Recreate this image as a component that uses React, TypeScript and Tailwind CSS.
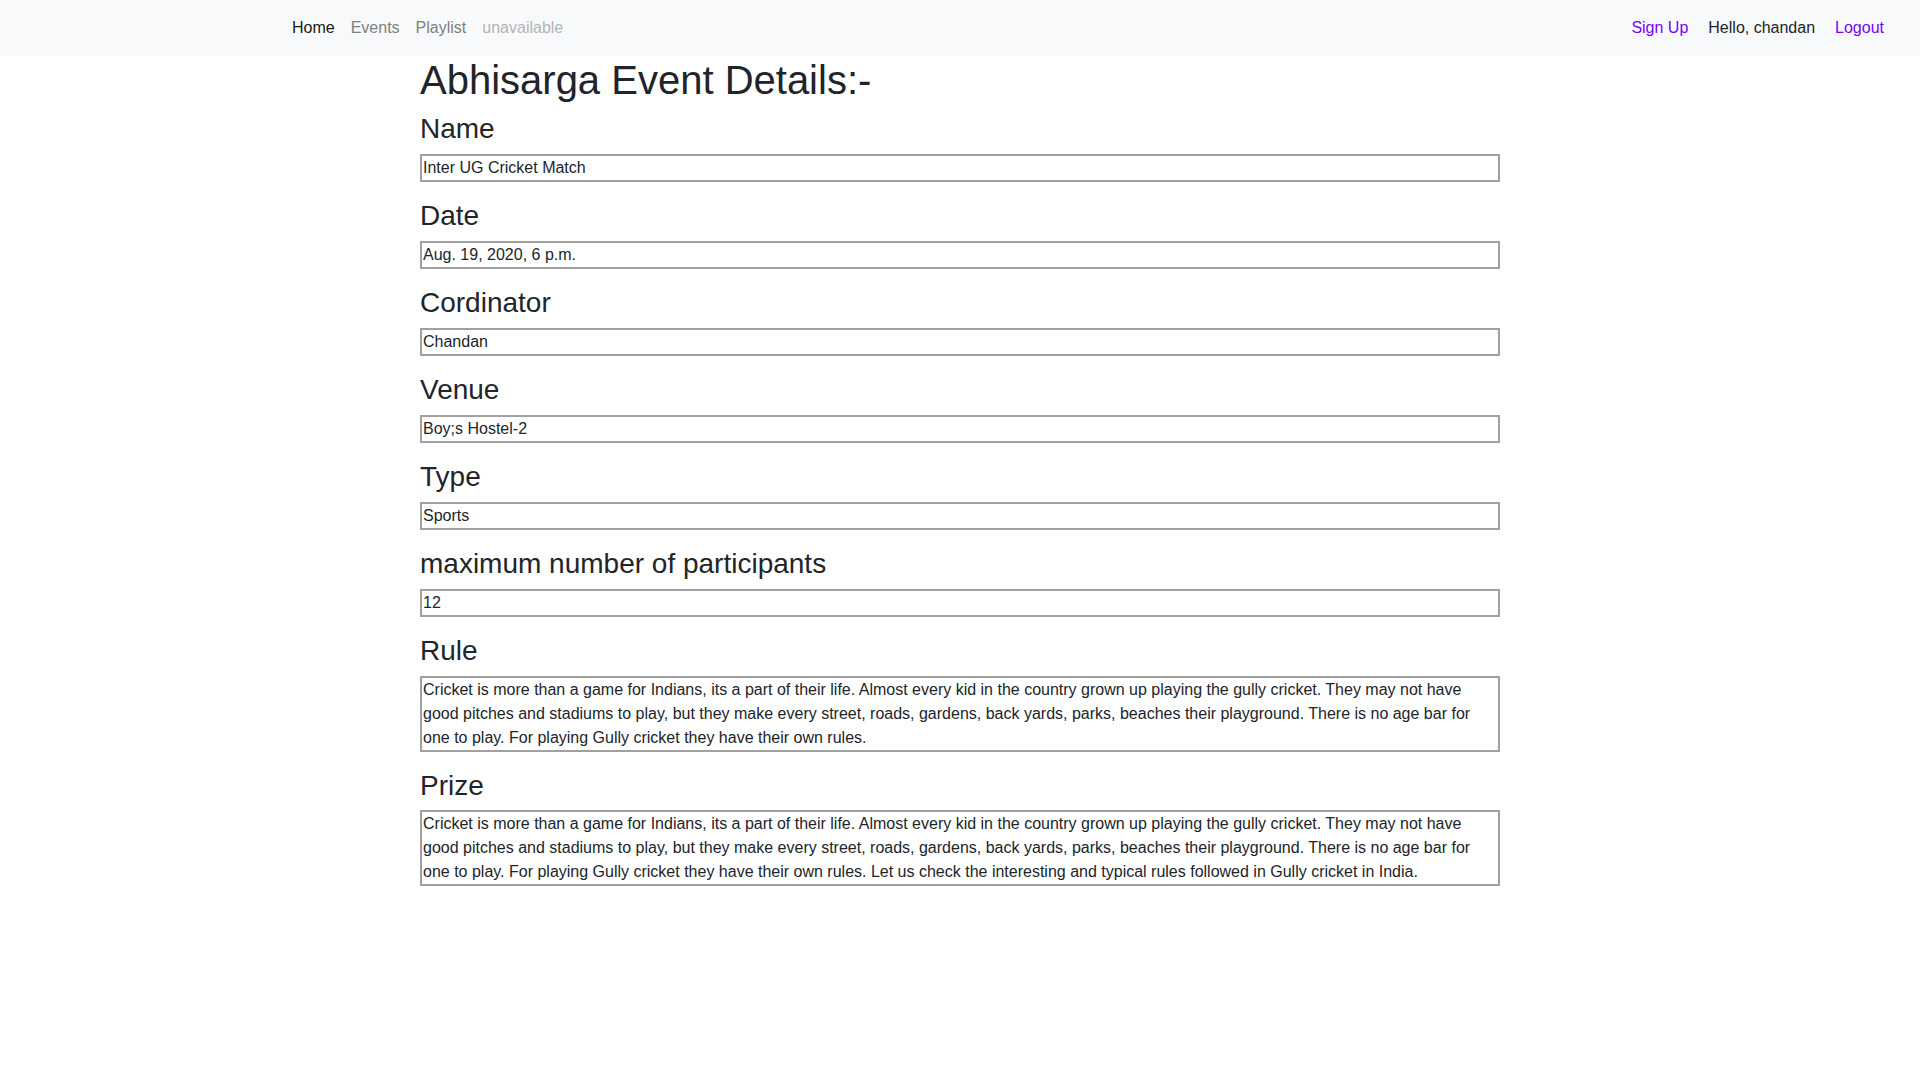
import React from "react";

const RULE_TEXT =
  "Cricket is more than a game for Indians, its a part of their life. Almost every kid in the country grown up playing the gully cricket. They may not have good pitches and stadiums to play, but they make every street, roads, gardens, back yards, parks, beaches their playground. There is no age bar for one to play. For playing Gully cricket they have their own rules.";

const PRIZE_TEXT =
  "Cricket is more than a game for Indians, its a part of their life. Almost every kid in the country grown up playing the gully cricket. They may not have good pitches and stadiums to play, but they make every street, roads, gardens, back yards, parks, beaches their playground. There is no age bar for one to play. For playing Gully cricket they have their own rules. Let us check the interesting and typical rules followed in Gully cricket in India.";

type Field = {
  label: string;
  value: string;
  multi?: boolean;
};

const fields: Field[] = [
  { label: "Name", value: "Inter UG Cricket Match" },
  { label: "Date", value: "Aug. 19, 2020, 6 p.m." },
  { label: "Cordinator", value: "Chandan" },
  { label: "Venue", value: "Boy;s Hostel-2" },
  { label: "Type", value: "Sports" },
  { label: "maximum number of participants", value: "12" },
  { label: "Rule", value: RULE_TEXT, multi: true },
  { label: "Prize", value: PRIZE_TEXT, multi: true },
];

function Navbar() {
  return (
    <nav className="flex h-[56px] items-center bg-[#f8f9fa] text-[16px] leading-6">
      {/* 왼쪽 메뉴 */}
      <div className="flex items-center pl-[284px]">
        <a className="px-2 text-[#1a1a1a]">Home</a>
        <a className="px-2 text-[#808080]">Events</a>
        <a className="px-2 text-[#808080]">Playlist</a>
        <a className="px-2 text-[#b3b3b3]">unavailable</a>
      </div>
      {/* 오른쪽 메뉴 */}
      <div className="ml-auto flex items-center pr-[36px]">
        <a className="mr-[20px] text-[#7a00ff]">Sign Up</a>
        <span className="mr-[20px] text-[#212529]">Hello, chandan</span>
        <a className="text-[#7a00ff]">Logout</a>
      </div>
    </nav>
  );
}

export default function App() {
  return (
    <div className="min-h-screen bg-white font-['Liberation_Sans',Arial,sans-serif] text-[#212529]">
      <Navbar />
      <div className="ml-[420px] w-[1080px]">
        <h1 className="mb-2 text-[40px] leading-[1.2] font-medium">
          Abhisarga Event Details:-
        </h1>
        {fields.map((field, index) => (
          <div key={index} className="mb-[17.4px]">
            <h3 className="mb-2 text-[28px] leading-[1.2] font-medium">
              {field.label}
            </h3>
            {field.multi ? (
              <textarea
                readOnly
                rows={3}
                value={field.value}
                className="block h-[76px] w-full resize-none overflow-hidden border-2 border-[#a0a0a0] px-px text-[16px] leading-6 text-[#212529] outline-none"
              />
            ) : (
              <input
                readOnly
                value={field.value}
                className="block h-[28px] w-full border-2 border-[#a0a0a0] px-px text-[16px] leading-6 text-[#212529] outline-none"
              />
            )}
          </div>
        ))}
      </div>
    </div>
  );
}
